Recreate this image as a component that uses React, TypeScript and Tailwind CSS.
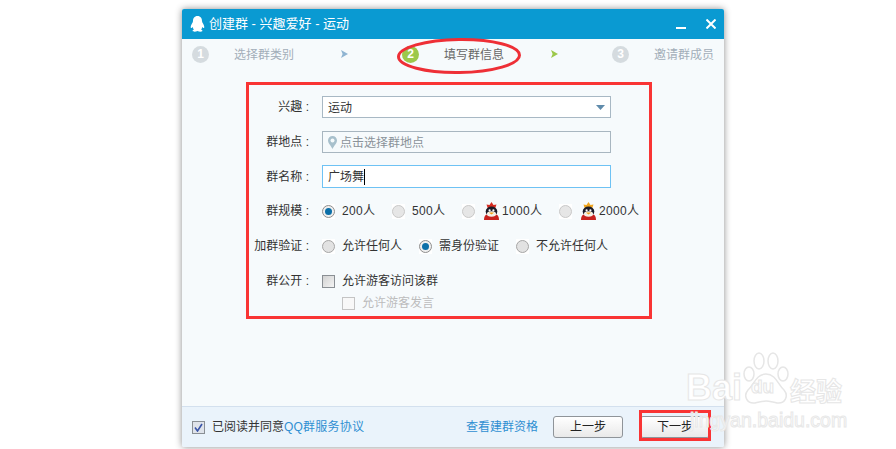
import React from "react";

const Radio = ({ on = false, dark = false }: { on?: boolean; dark?: boolean }) => (
  <span className="flex h-[15px] w-[13px] shrink-0 items-center justify-center bg-white">
    <span className={`flex h-[13px] w-[13px] shrink-0 items-center justify-center rounded-full border ${on ? "border-[#8e8e8e] bg-[#efefef]" : dark ? "border-[#a6a6a6] bg-[#e2e2e2]" : "border-[#c8c8c8] bg-[#e6e6e6]"}`}>
      {on && <span className="h-[7px] w-[7px] rounded-full bg-[#0b6fa8]" />}
    </span>
  </span>
);

const Penguin = ({ body, crest }: { body: string; crest: string }) => (
  <svg width="15" height="18" viewBox="0 0 15 18" className="shrink-0">
    <path d="M7.5 0 L9.5 3 L12.5 2.5 L11 7 L4 7 L2.5 2.5 L5.5 3 Z" fill={crest} />
    <ellipse cx="7.5" cy="9.5" rx="5.8" ry="5" fill="#1c1c28" />
    <path d="M0 18 Q0 13 3 12.5 L12 12.5 Q15 13 15 18 Z" fill={body} />
    <ellipse cx="7.5" cy="12" rx="4.6" ry="2.8" fill="#f4f0e6" />
    <circle cx="5.6" cy="8.4" r="1.1" fill="#fff" />
    <circle cx="9.4" cy="8.4" r="1.1" fill="#fff" />
    <path d="M4.8 10.4 L10.2 10.4 L7.5 12.4 Z" fill="#f2a31c" />
  </svg>
);

const Label = ({ children }: { children: React.ReactNode }) => (
  <div className="w-[128px] shrink-0 whitespace-nowrap pr-px text-right text-[#333]">{children} :</div>
);

const Row = ({ label, className, children }: { label?: string; className: string; children: React.ReactNode }) => (
  <div className={`flex items-center ${className}`}>
    {label ? <Label>{label}</Label> : <div className="w-[128px] shrink-0" />}
    <div className="ml-[12px] flex min-w-0 flex-1 items-center">{children}</div>
  </div>
);

const Btn = ({ children }: { children: React.ReactNode }) => (
  <div className="flex h-[22px] w-[70px] items-center justify-center rounded-[3px] border border-[#8f9499] bg-gradient-to-b from-white to-[#e9e9e9] text-[#222]">
    {children}
  </div>
);

export default function App() {
  return (
    <div className="relative h-[449px] w-[896px] overflow-hidden bg-white pl-[182px] pt-[9px] text-[12px] font-['Liberation_Sans','Noto_Sans_CJK_SC',sans-serif] leading-[16px]">
      <div className="flex h-[438px] w-[542px] flex-col rounded-[2px] bg-[#f6fafc] shadow-[0_0_7px_rgba(0,0,0,0.45)]">
        <div className="flex h-[30px] shrink-0 items-center rounded-t-[2px] bg-[#0a9ad2] pl-[8px] pr-[8px] text-[13px] text-white">
          <svg width="15" height="16" viewBox="0 0 15 16" className="mr-[4px]">
            <path d="M7.5 0C4.4 0 3 2.4 3 5 C3 6 2.6 6.6 2 7.6 C1 9.2 .4 11 .9 12 C1.3 12.4 2.2 11.4 2.6 10.9 C2.9 12 3.3 12.8 4 13.4 C3 13.8 2.4 14.3 2.6 15 C3 15.9 6 15.8 7.5 15 C9 15.8 12 15.9 12.4 15 C12.6 14.3 12 13.8 11 13.4 C11.7 12.8 12.1 12 12.4 10.9 C12.8 11.4 13.7 12.4 14.1 12 C14.6 11 14 9.2 13 7.6 C12.4 6.6 12 6 12 5 C12 2.4 10.6 0 7.5 0Z" fill="#fff" />
          </svg>
          <span className="whitespace-nowrap">创建群 - 兴趣爱好 - 运动</span>
          <div className="ml-auto flex items-center">
            <span className="mt-[8px] h-[2px] w-[10px] bg-white" />
            <svg width="10" height="10" viewBox="0 0 10 10" className="ml-[20px]">
              <path d="M.5 .5 L9.5 9.5 M9.5 .5 L.5 9.5" stroke="#fff" strokeWidth="2" />
            </svg>
          </div>
        </div>

        <div className="flex h-[30px] shrink-0 items-center pl-[10px] text-[#a3aeb9]">
          <span className="flex h-[17px] w-[17px] items-center justify-center rounded-full bg-[#d5dbdf] text-[12px] font-bold text-white">1</span>
          <span className="ml-[25px] w-[60px] whitespace-nowrap pt-px">选择群类别</span>
          <svg width="7" height="8" viewBox="0 0 7 8" className="ml-[47px]"><path d="M0 0 L7 4 L0 8 L1.6 4Z" fill="#8fb4d2" /></svg>
          <span className="ml-[54px] flex h-[17px] w-[17px] items-center justify-center rounded-full bg-[#9cc84a] text-[12px] font-bold text-white">2</span>
          <span className="ml-[25px] w-[60px] whitespace-nowrap pt-px text-[#666]">填写群信息</span>
          <svg width="7" height="8" viewBox="0 0 7 8" className="ml-[47px]"><path d="M0 0 L7 4 L0 8 L1.6 4Z" fill="#9cc84a" /></svg>
          <span className="ml-[54px] flex h-[17px] w-[17px] items-center justify-center rounded-full bg-[#d5dbdf] text-[12px] font-bold text-white">3</span>
          <span className="ml-[25px] w-[60px] whitespace-nowrap pt-px">邀请群成员</span>
        </div>

        <div className="flex-1 pt-[27px]">
          <Row label="兴趣" className="h-[22px]">
            <div className="flex h-[22px] w-[289px] items-center justify-between border border-[#a8b8c4] bg-white pl-[5px] pr-[5px] text-[#333]">
              <span className="pt-px">运动</span>
              <svg width="9" height="5" viewBox="0 0 9 5"><path d="M0 0 H9 L4.5 5Z" fill="#5f8bab" /></svg>
            </div>
          </Row>
          <Row label="群地点" className="mt-[13px] h-[22px]">
            <div className="flex h-[22px] w-[289px] items-center border border-[#a8b6c0] pl-[5px] text-[#8a9299]">
              <svg width="9" height="13" viewBox="0 0 9 13" className="mr-[3px]">
                <path d="M4.5 0 C2 0 0 2 0 4.4 C0 7.4 3.4 10 4.5 13 C5.6 10 9 7.4 9 4.4 C9 2 7 0 4.5 0Z" fill="#a8c0cc" />
                <circle cx="4.5" cy="4.4" r="2" fill="#f6fafc" />
              </svg>
              <span className="pt-px">点击选择群地点</span>
            </div>
          </Row>
          <Row label="群名称" className="mt-[12px] h-[23px]">
            <div className="flex h-[23px] w-[289px] items-center border border-[#6ec2f4] bg-white pl-[5px] text-[#333]">
              <span>广场舞</span>
              <span className="h-[16px] w-px bg-black" />
            </div>
          </Row>
          <Row label="群规模" className="mt-[13px] h-[20px] text-[#333]">
            <div className="flex w-[70px] items-center"><Radio on /><span className="ml-[7px] tracking-[0.3px]">200人</span></div>
            <div className="flex w-[70px] items-center"><Radio /><span className="ml-[7px] tracking-[0.3px]">500人</span></div>
            <div className="flex w-[97px] items-center"><Radio /><span className="ml-[9px]"><Penguin body="#c8221e" crest="#d62c22" /></span><span className="ml-[3px] tracking-[0.3px]">1000人</span></div>
            <div className="flex items-center"><Radio /><span className="ml-[9px]"><Penguin body="#c8221e" crest="#f0a51e" /></span><span className="ml-[3px] whitespace-nowrap tracking-[0.3px]">2000人</span></div>
          </Row>
          <Row label="加群验证" className="mt-[15px] h-[20px] text-[#333]">
            <div className="flex w-[97px] items-center"><Radio dark /><span className="ml-[7px]">允许任何人</span></div>
            <div className="flex w-[97px] items-center"><Radio on /><span className="ml-[7px]">需身份验证</span></div>
            <div className="flex items-center"><Radio dark /><span className="ml-[7px]">不允许任何人</span></div>
          </Row>
          <Row label="群公开" className="mt-[15px] h-[20px] text-[#333]">
            <span className="h-[13px] w-[13px] shrink-0 border border-[#8a8f94] bg-gradient-to-br from-[#d2d2d2] to-[#f4f4f4]" />
            <span className="ml-[7px]">允许游客访问该群</span>
          </Row>
          <Row className="mt-[2px] h-[20px]">
            <span className="ml-[20px] h-[13px] w-[13px] shrink-0 border border-[#c4c4c4] bg-[#f8f8f8]" />
            <span className="ml-[7px] text-[#bcbcbc]">允许游客发言</span>
          </Row>
        </div>

        <div className="flex h-[41px] shrink-0 items-center rounded-b-[2px] border-t border-[#d3e0ee] bg-[#eaf3fb] pl-[10px] pr-[14px] text-[#333]">
          <span className="flex h-[13px] w-[13px] items-center justify-center border border-[#8a8f94] bg-[#dfe3ea]">
            <svg width="9" height="9" viewBox="0 0 9 9"><path d="M1 4.5 L3.5 8 L8 1" fill="none" stroke="#3a55a8" strokeWidth="1.6" /></svg>
          </span>
          <span className="ml-[7px] whitespace-nowrap">已阅读并同意<span className="text-[#2f8fd2] tracking-[0.2px]">QQ群服务协议</span></span>
          <span className="ml-auto mr-[15px] whitespace-nowrap text-[#2f8fd2]">查看建群资格</span>
          <Btn>上一步</Btn>
          <div className="ml-[17px]"><Btn>下一步</Btn></div>
        </div>
      </div>

      {/* red annotations */}
      <div className="pointer-events-none absolute left-[246px] top-[82px] h-[237px] w-[406px] border-[3px] border-[#f93434]" />
      <div className="pointer-events-none absolute left-[639px] top-[410px] h-[31px] w-[72px] border-[3px] border-[#f93434]" />
      <svg className="pointer-events-none absolute left-[395px] top-[36px]" width="128" height="40" viewBox="0 0 128 40">
        <ellipse cx="64" cy="20" rx="60.5" ry="16.5" fill="none" stroke="#ee2f36" strokeWidth="3" transform="rotate(-0.8 64 20)" />
      </svg>

      {/* Baidu watermark */}
      <div className="pointer-events-none absolute left-[686px] top-[366px] text-[36px] font-bold leading-[44px] text-white [-webkit-text-stroke:1px_#e6e6e6] font-['Liberation_Sans',sans-serif]">Bai</div>
      <svg className="pointer-events-none absolute left-[742px] top-[352px]" width="48" height="54" viewBox="0 0 48 54">
        <g fill="#fff" stroke="#e6e6e6" strokeWidth="1.5">
          <ellipse cx="7" cy="22" rx="5" ry="7" />
          <ellipse cx="17" cy="9" rx="5" ry="8" />
          <ellipse cx="31" cy="9" rx="5" ry="8" />
          <ellipse cx="41" cy="22" rx="5" ry="7" />
          <path d="M24 22 C14 22 12 33 6 38 C1 44 5 52 13 51 C18 50 21 49 24 49 C27 49 30 50 35 51 C43 52 47 44 42 38 C36 33 34 22 24 22Z" />
        </g>
      </svg>
      <div className="pointer-events-none absolute left-[751px] top-[375px] text-[19px] font-bold leading-[24px] text-white [-webkit-text-stroke:1px_#e6e6e6] font-['Liberation_Sans',sans-serif]">du</div>
      <div className="pointer-events-none absolute left-[790px] top-[374px] text-[26px] font-bold leading-[32px] font-['Noto_Sans_CJK_SC',sans-serif] text-white [-webkit-text-stroke:1px_#e6e6e6]">经验</div>
      <div className="pointer-events-none absolute left-[690px] top-[408px] text-[19.5px] leading-[24px] text-white [-webkit-text-stroke:1px_#e8e8e8] font-['Liberation_Sans',sans-serif]">jingyan.baidu.com</div>
    </div>
  );
}
